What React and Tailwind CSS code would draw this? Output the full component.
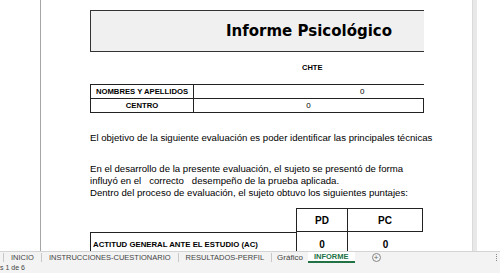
import React from "react";

const body = "font-['Liberation_Sans',Arial,sans-serif]";

function Sep() {
  return <div className="w-px h-[9px] bg-[#c8c8c8]"></div>;
}

export default function App() {
  return (
    <div className={`w-[500px] h-[273px] flex flex-col overflow-hidden bg-white text-black ${body}`}>
      {/* Sheet area */}
      <div className="h-[251px] flex overflow-hidden">
        <div className="w-[40px] shrink-0 bg-white"></div>
        <div className="w-px shrink-0 bg-[#a6a6a6]"></div>
        <div className="w-[431px] shrink-0 pl-[49px] pt-[10px]">
          <div className="w-[360px]">
            <div className="w-[334px]">
              {/* Title */}
              <div className="h-[42px] bg-[#f0f0f0] border-y border-l border-[#333] flex items-center pl-[135px]">
                <span className="font-['DejaVu_Sans',sans-serif] font-bold text-[15px] whitespace-nowrap">
                  Informe Psicológico
                </span>
              </div>

              {/* CHTE */}
              <div className="h-[32px] flex items-center pl-[212px]">
                <span className="font-bold text-[7.5px]">CHTE</span>
              </div>

              {/* Name table */}
              <div className="flex h-[14px] border-t border-[#222]">
                <div className="w-[103px] border-l border-[#222] flex items-center justify-center font-bold text-[7.7px] whitespace-nowrap">
                  NOMBRES Y APELLIDOS
                </div>
                <div className="flex-1 border-l border-[#222] flex items-center pl-[166px] text-[8px]">0</div>
              </div>
              <div className="flex h-[15px] border-y border-[#222]">
                <div className="w-[103px] border-l border-[#222] flex items-center justify-center font-bold text-[7.7px]">
                  CENTRO
                </div>
                <div className="flex-1 border-x border-[#222] flex items-center justify-center text-[8px]">0</div>
              </div>
            </div>

            {/* Paragraphs */}
            <p className="mt-[19px] text-[9.6px] leading-[12px] whitespace-nowrap">
              El objetivo de la siguiente evaluación es poder identificar las principales técnicas
            </p>
            <div className="mt-[19px] text-[9.6px] leading-[12px] whitespace-pre">
              <p>En el desarrollo de la presente evaluación, el sujeto se presentó de forma</p>
              <p>influyó en el   correcto   desempeño de la prueba aplicada.</p>
              <p>Dentro del proceso de evaluación, el sujeto obtuvo los siguientes puntajes:</p>
            </div>

            {/* Score table */}
            <div className="w-[334px] mt-[9px]">
              <div className="flex h-[24px]">
                <div className="w-[206px]"></div>
                <div className="w-[51px] border-l border-y border-[#222] flex items-center justify-center font-bold text-[10px]">PD</div>
                <div className="w-[76px] border border-[#222] flex items-center justify-center font-bold text-[10px]">PC</div>
              </div>
              <div className="flex h-[24px]">
                <div className="w-[206px] border-l border-t border-[#222] flex items-center pl-[2px] font-bold text-[7.8px] whitespace-nowrap">
                  ACTITUD GENERAL ANTE EL ESTUDIO (AC)
                </div>
                <div className="w-[51px] border-l border-[#222] flex items-center justify-center font-bold text-[10px]">0</div>
                <div className="w-[76px] border-l border-[#222] flex items-center justify-center font-bold text-[10px]">0</div>
              </div>
            </div>
          </div>
        </div>
        <div className="w-[5px] shrink-0 bg-[#e8e8e8] border-l border-[#dadada]"></div>
        <div className="flex-1 bg-white"></div>
      </div>

      {/* Sheet tabs */}
      <div className="h-[12px] shrink-0 bg-[#f3f3f3] border-t border-[#d4d4d4] flex items-center text-[7.5px] text-[#444]">
        <div className="w-[3px]"></div>
        <Sep />
        <span className="px-[7px]">INICIO</span>
        <Sep />
        <span className="px-[7px]">INSTRUCCIONES-CUESTIONARIO</span>
        <Sep />
        <span className="px-[7px]">RESULTADOS-PERFIL</span>
        <Sep />
        <span className="px-[5px] text-[8px]">Gráfico</span>
        <div className="h-full bg-white px-[6px] flex items-center border-b-2 border-[#217346]">
          <span className="font-bold text-[#217346]">INFORME</span>
        </div>
        <div className="ml-[17px] w-[9px] h-[9px] rounded-full border border-[#888] flex items-center justify-center text-[8px] leading-none text-[#666]">
          +
        </div>
        <div className="flex-1"></div>
        <div className="w-[2px] h-[7px] border-l border-dotted border-[#888] mr-[2px]"></div>
      </div>

      {/* Status bar */}
      <div className="flex-1 bg-[#f3f3f3] flex items-start">
        <span className="text-[7px] text-[#444] leading-[10px]">s 1 de 6</span>
      </div>
    </div>
  );
}
